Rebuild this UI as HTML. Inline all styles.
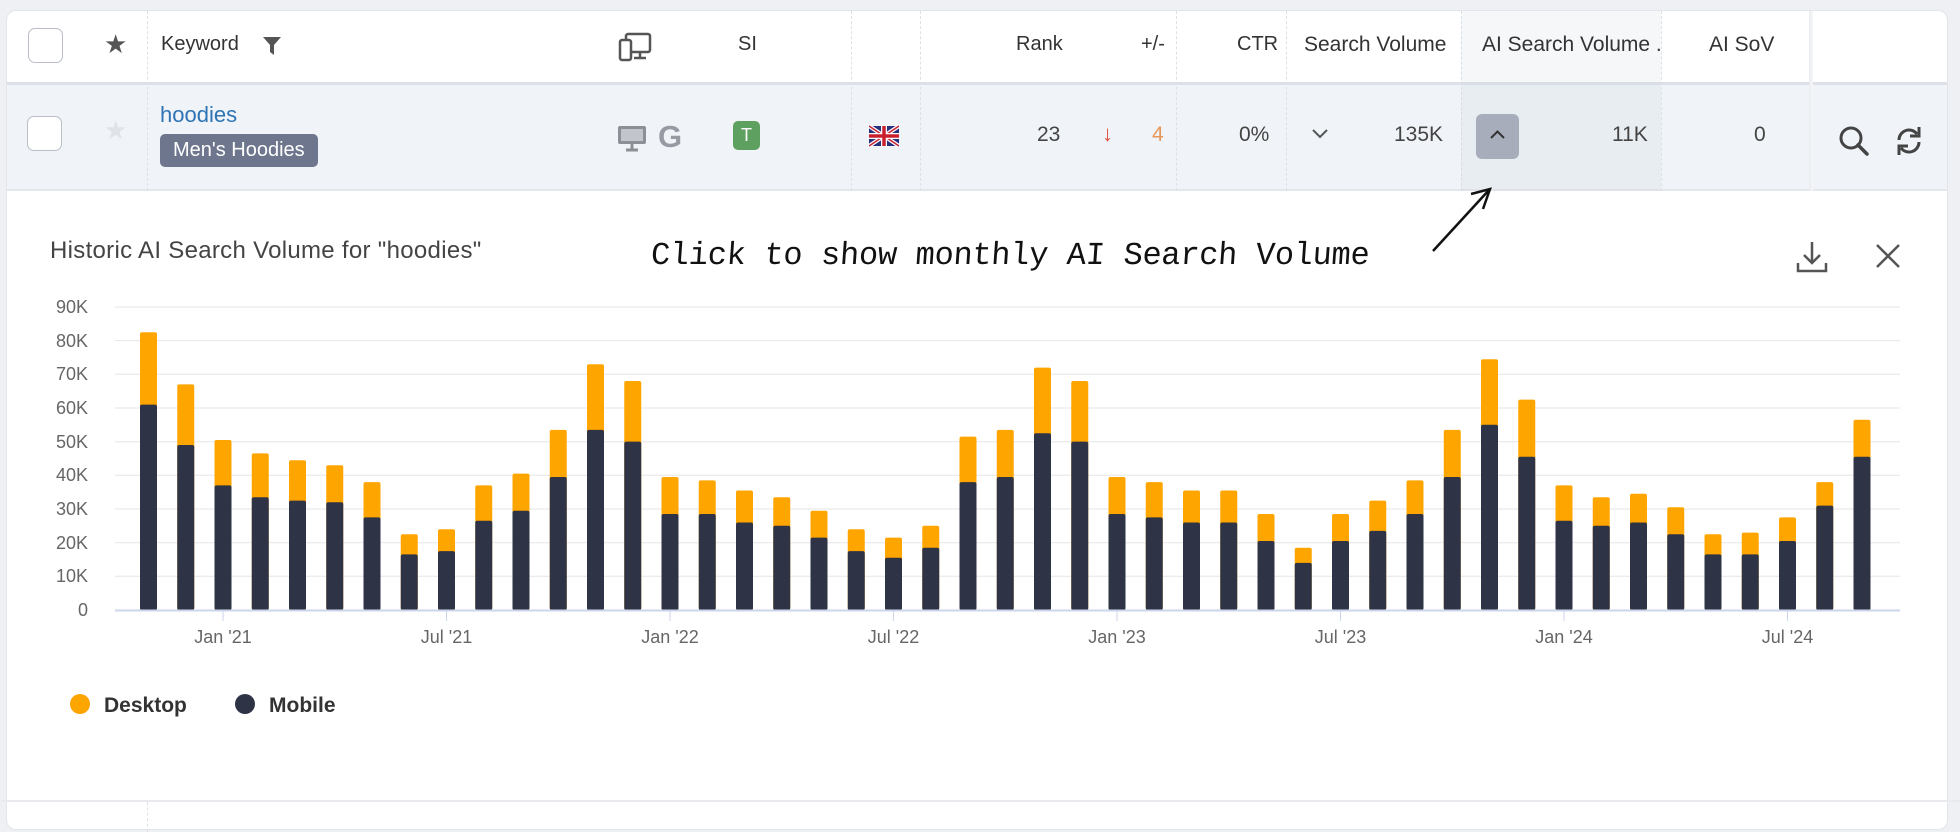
<!DOCTYPE html>
<html><head><meta charset="utf-8"><style>
*{margin:0;padding:0;box-sizing:border-box}
body{width:1960px;height:818px;background:#eef0f3;font-family:"Liberation Sans",sans-serif;position:relative;overflow:hidden;color:#333}
.card{position:absolute;left:6px;top:10px;width:1942px;height:820px;background:#fff;border-radius:10px;border:1px solid #e2e5ea}
.a{position:absolute}
.hdr{font-size:20px;color:#333}
.row{position:absolute;left:0;top:71px;width:1940px;height:109px;background:#f0f3f7;border-top:3px solid #dde1e7;border-bottom:2px solid #e4e7ec}
.vl{position:absolute;top:0;width:1px;height:180px;border-left:1px dashed #dde1e6}
.cb{position:absolute;width:35px;height:35px;border:1.5px solid #b9bec7;border-radius:7px;background:#fff}
.num{font-size:21px;color:#444}
</style></head><body>
<div class="card">
  <div class="row"></div>
  <div class="vl" style="left:140px"></div>
  <div class="vl" style="left:844px"></div>
  <div class="vl" style="left:913px"></div>
  <div class="vl" style="left:1169px"></div>
  <div class="vl" style="left:1279px"></div>
  <div class="vl" style="left:1454px"></div>
  <div class="a" style="left:1454px;top:0;width:200px;height:180px;background:rgba(200,208,220,0.18)"></div>
  <div class="vl" style="left:1654px"></div>
  <div class="a" style="left:1802px;top:0;width:4px;height:180px;background:linear-gradient(90deg,#e8ebef,#f6f7f9)"></div>

  <div class="cb" style="left:21px;top:17px"></div>
  <div class="a" style="left:97px;top:18px;font-size:26px;color:#555">★</div>
  <div class="a hdr" style="left:154px;top:22px">Keyword</div>
  <svg class="a" style="left:255px;top:24px" width="20" height="22" viewBox="0 0 20 22"><path d="M1 2h18l-7 8v10l-4-3v-7z" fill="#555"/></svg>
  <svg class="a" style="left:611px;top:21px" width="34" height="30" viewBox="0 0 34 30"><rect x="8" y="2" width="24" height="18" rx="2" fill="none" stroke="#555" stroke-width="2.5"/><rect x="2" y="8" width="11" height="20" rx="2" fill="#fff" stroke="#555" stroke-width="2.5"/><path d="M16 26h12M22 20v6" stroke="#555" stroke-width="2.5"/></svg>
  <div class="a hdr" style="left:731px;top:22px">SI</div>
  <div class="a hdr" style="left:1009px;top:22px">Rank</div>
  <div class="a hdr" style="left:1134px;top:22px">+/-</div>
  <div class="a hdr" style="left:1230px;top:22px">CTR</div>
  <div class="a hdr" style="left:1297px;top:22px;font-size:21px">Search Volume</div>
  <div class="a hdr" style="left:1475px;top:22px;width:180px;overflow:hidden;white-space:nowrap;font-size:21px">AI Search Volume .</div>
  <div class="a hdr" style="left:1702px;top:22px;font-size:21px">AI SoV</div>

  <div class="cb" style="left:20px;top:105px"></div>
  <div class="a" style="left:97px;top:104px;font-size:26px;color:#dfe2e7">★</div>
  <div class="a" style="left:153px;top:91px;font-size:22px;color:#2e74b5">hoodies</div>
  <div class="a" style="left:153px;top:123px;height:33px;padding:0 13px;line-height:33px;background:#6e768d;color:#fff;font-size:20px;border-radius:5px">Men's Hoodies</div>
  <svg class="a" style="left:610px;top:113px" width="30" height="30" viewBox="0 0 30 30"><rect x="1" y="2" width="28" height="18" rx="2" fill="#8c8f96"/><rect x="4" y="5" width="22" height="12" fill="#c2c5cb"/><path d="M15 20v5M9 26h12" stroke="#8c8f96" stroke-width="3"/></svg>
  <div class="a" style="left:651px;top:108px;font-size:31px;font-weight:bold;color:#979aa2">G</div>
  <div class="a" style="left:726px;top:110px;width:27px;height:29px;background:#5ea05f;border-radius:5px;color:#fff;font-size:18px;text-align:center;line-height:29px">T</div>
  <svg class="a" style="left:862px;top:112px" width="30" height="26" viewBox="0 0 60 40"><rect width="60" height="40" fill="#27307a"/><path d="M0 0L60 40M60 0L0 40" stroke="#fff" stroke-width="8"/><path d="M0 0L60 40M60 0L0 40" stroke="#c8202f" stroke-width="3"/><path d="M30 0v40M0 20h60" stroke="#fff" stroke-width="12"/><path d="M30 0v40M0 20h60" stroke="#c8202f" stroke-width="7"/></svg>
  <div class="a num" style="left:1030px;top:112px">23</div>
  <div class="a" style="left:1095px;top:110px;font-size:22px;color:#e04a3c">↓</div>
  <div class="a num" style="left:1145px;top:112px;color:#e8975a">4</div>
  <div class="a num" style="left:1232px;top:112px">0%</div>
  <svg class="a" style="left:1304px;top:117px" width="18" height="12" viewBox="0 0 18 12"><path d="M2 2l7 7 7-7" stroke="#555" stroke-width="2" fill="none"/></svg>
  <div class="a num" style="left:1387px;top:112px">135K</div>
  <div class="a" style="left:1469px;top:103px;width:43px;height:45px;background:#a7adba;border-radius:6px"></div>
  <svg class="a" style="left:1482px;top:118px" width="17" height="12" viewBox="0 0 17 12"><path d="M2 9l6.5-6.5 6.5 6.5" stroke="#333" stroke-width="2" fill="none"/></svg>
  <div class="a num" style="left:1605px;top:112px">11K</div>
  <div class="a num" style="left:1747px;top:112px">0</div>
  <svg class="a" style="left:1830px;top:113px" width="34" height="34" viewBox="0 0 34 34"><circle cx="14" cy="14" r="10" fill="none" stroke="#444" stroke-width="3"/><path d="M21 21l9 9" stroke="#444" stroke-width="3.5" stroke-linecap="round"/></svg>
  <svg class="a" style="left:1886px;top:113px" width="32" height="34" viewBox="0 0 32 34"><path d="M6 16a10 10 0 0 1 18-6" fill="none" stroke="#444" stroke-width="3"/><path d="M26 3v9h-9" fill="none" stroke="#444" stroke-width="3"/><path d="M26 18a10 10 0 0 1-18 6" fill="none" stroke="#444" stroke-width="3"/><path d="M6 31v-9h9" fill="none" stroke="#444" stroke-width="3"/></svg>

  <div class="a" style="left:43px;top:226px;font-size:24px;color:#444;letter-spacing:0.3px">Historic AI Search Volume for "hoodies"</div>
  <div class="a" style="left:644px;top:226px;font-size:32px;font-family:'Liberation Mono',monospace;color:#111;letter-spacing:-0.3px;transform:skewX(-4deg)">Click to show monthly AI Search Volume</div>
  <svg class="a" style="left:1412px;top:165px" width="80" height="80" viewBox="0 0 80 80"><path d="M14 75L70 14" stroke="#111" stroke-width="2.5" fill="none"/><path d="M52 18L71 13L64 33" stroke="#111" stroke-width="2.5" fill="none"/></svg>
  <svg class="a" style="left:1788px;top:228px" width="34" height="36" viewBox="0 0 34 36"><path d="M17 3v20M9 16l8 8 8-8" stroke="#555" stroke-width="2.5" fill="none"/><path d="M3 24v8h28v-8" stroke="#555" stroke-width="2.5" fill="none"/></svg>
  <svg class="a" style="left:1866px;top:230px" width="30" height="30" viewBox="0 0 30 30"><path d="M4 4l22 22M26 4L4 26" stroke="#555" stroke-width="2.5"/></svg>
  <div class="a" style="left:-6px;top:789px;width:1960px;height:2px;background:#e8eaee"></div>
  <div class="vl" style="left:140px;top:791px;height:30px"></div>
</div>

<svg class="a" style="left:0;top:0" width="1960" height="818" font-family="Liberation Sans, sans-serif">
  <g stroke="#e6e6e6" stroke-width="1">
    <line x1="115" x2="1900" y1="576.3" y2="576.3"/><line x1="115" x2="1900" y1="542.7" y2="542.7"/>
    <line x1="115" x2="1900" y1="509" y2="509"/><line x1="115" x2="1900" y1="475.3" y2="475.3"/>
    <line x1="115" x2="1900" y1="441.7" y2="441.7"/><line x1="115" x2="1900" y1="408" y2="408"/>
    <line x1="115" x2="1900" y1="374.3" y2="374.3"/><line x1="115" x2="1900" y1="340.6" y2="340.6"/>
    <line x1="115" x2="1900" y1="307" y2="307"/>
  </g>
  <g fill="#666" font-size="18" text-anchor="end">
    <text x="88" y="616">0</text><text x="88" y="582">10K</text><text x="88" y="549">20K</text>
    <text x="88" y="515">30K</text><text x="88" y="481">40K</text><text x="88" y="448">50K</text>
    <text x="88" y="414">60K</text><text x="88" y="380">70K</text><text x="88" y="347">80K</text><text x="88" y="313">90K</text>
  </g>
  <g fill="#ffa500">
<rect x="140" y="332.2" width="17" height="277.8" rx="2"/><rect x="177.25" y="384.4" width="17" height="225.6" rx="2"/><rect x="214.5" y="440" width="17" height="170" rx="2"/><rect x="251.75" y="453.4" width="17" height="156.6" rx="2"/><rect x="289" y="460.2" width="17" height="149.8" rx="2"/><rect x="326.25" y="465.2" width="17" height="144.8" rx="2"/><rect x="363.5" y="482.1" width="17" height="127.9" rx="2"/><rect x="400.75" y="534.2" width="17" height="75.8" rx="2"/><rect x="438" y="529.2" width="17" height="80.8" rx="2"/><rect x="475.25" y="485.4" width="17" height="124.6" rx="2"/><rect x="512.5" y="473.6" width="17" height="136.4" rx="2"/><rect x="549.75" y="429.9" width="17" height="180.1" rx="2"/><rect x="587" y="364.2" width="17" height="245.8" rx="2"/><rect x="624.25" y="381" width="17" height="229" rx="2"/><rect x="661.5" y="477" width="17" height="133" rx="2"/><rect x="698.75" y="480.4" width="17" height="129.6" rx="2"/><rect x="736" y="490.5" width="17" height="119.5" rx="2"/><rect x="773.25" y="497.2" width="17" height="112.8" rx="2"/><rect x="810.5" y="510.7" width="17" height="99.3" rx="2"/><rect x="847.75" y="529.2" width="17" height="80.8" rx="2"/><rect x="885" y="537.6" width="17" height="72.4" rx="2"/><rect x="922.25" y="525.8" width="17" height="84.2" rx="2"/><rect x="959.5" y="436.6" width="17" height="173.4" rx="2"/><rect x="996.75" y="429.9" width="17" height="180.1" rx="2"/><rect x="1034" y="367.6" width="17" height="242.4" rx="2"/><rect x="1071.25" y="381" width="17" height="229" rx="2"/><rect x="1108.5" y="477" width="17" height="133" rx="2"/><rect x="1145.75" y="482.1" width="17" height="127.9" rx="2"/><rect x="1183" y="490.5" width="17" height="119.5" rx="2"/><rect x="1220.25" y="490.5" width="17" height="119.5" rx="2"/><rect x="1257.5" y="514" width="17" height="96" rx="2"/><rect x="1294.75" y="547.7" width="17" height="62.3" rx="2"/><rect x="1332" y="514" width="17" height="96" rx="2"/><rect x="1369.25" y="500.6" width="17" height="109.4" rx="2"/><rect x="1406.5" y="480.4" width="17" height="129.6" rx="2"/><rect x="1443.75" y="429.9" width="17" height="180.1" rx="2"/><rect x="1481" y="359.2" width="17" height="250.8" rx="2"/><rect x="1518.25" y="399.6" width="17" height="210.4" rx="2"/><rect x="1555.5" y="485.4" width="17" height="124.6" rx="2"/><rect x="1592.75" y="497.2" width="17" height="112.8" rx="2"/><rect x="1630" y="493.8" width="17" height="116.2" rx="2"/><rect x="1667.25" y="507.3" width="17" height="102.7" rx="2"/><rect x="1704.5" y="534.2" width="17" height="75.8" rx="2"/><rect x="1741.75" y="532.6" width="17" height="77.4" rx="2"/><rect x="1779" y="517.4" width="17" height="92.6" rx="2"/><rect x="1816.25" y="482.1" width="17" height="127.9" rx="2"/><rect x="1853.5" y="419.8" width="17" height="190.2" rx="2"/>
  </g>
  <g fill="#2f3346">
<rect x="140" y="404.6" width="17" height="205.4" rx="2"/><rect x="177.25" y="445" width="17" height="165" rx="2"/><rect x="214.5" y="485.4" width="17" height="124.6" rx="2"/><rect x="251.75" y="497.2" width="17" height="112.8" rx="2"/><rect x="289" y="500.6" width="17" height="109.4" rx="2"/><rect x="326.25" y="502.3" width="17" height="107.7" rx="2"/><rect x="363.5" y="517.4" width="17" height="92.6" rx="2"/><rect x="400.75" y="554.4" width="17" height="55.6" rx="2"/><rect x="438" y="551.1" width="17" height="58.9" rx="2"/><rect x="475.25" y="520.8" width="17" height="89.2" rx="2"/><rect x="512.5" y="510.7" width="17" height="99.3" rx="2"/><rect x="549.75" y="477" width="17" height="133" rx="2"/><rect x="587" y="429.9" width="17" height="180.1" rx="2"/><rect x="624.25" y="441.6" width="17" height="168.4" rx="2"/><rect x="661.5" y="514" width="17" height="96" rx="2"/><rect x="698.75" y="514" width="17" height="96" rx="2"/><rect x="736" y="522.5" width="17" height="87.5" rx="2"/><rect x="773.25" y="525.8" width="17" height="84.2" rx="2"/><rect x="810.5" y="537.6" width="17" height="72.4" rx="2"/><rect x="847.75" y="551.1" width="17" height="58.9" rx="2"/><rect x="885" y="557.8" width="17" height="52.2" rx="2"/><rect x="922.25" y="547.7" width="17" height="62.3" rx="2"/><rect x="959.5" y="482.1" width="17" height="127.9" rx="2"/><rect x="996.75" y="477" width="17" height="133" rx="2"/><rect x="1034" y="433.2" width="17" height="176.8" rx="2"/><rect x="1071.25" y="441.6" width="17" height="168.4" rx="2"/><rect x="1108.5" y="514" width="17" height="96" rx="2"/><rect x="1145.75" y="517.4" width="17" height="92.6" rx="2"/><rect x="1183" y="522.5" width="17" height="87.5" rx="2"/><rect x="1220.25" y="522.5" width="17" height="87.5" rx="2"/><rect x="1257.5" y="541" width="17" height="69" rx="2"/><rect x="1294.75" y="562.9" width="17" height="47.1" rx="2"/><rect x="1332" y="541" width="17" height="69" rx="2"/><rect x="1369.25" y="530.9" width="17" height="79.1" rx="2"/><rect x="1406.5" y="514" width="17" height="96" rx="2"/><rect x="1443.75" y="477" width="17" height="133" rx="2"/><rect x="1481" y="424.8" width="17" height="185.2" rx="2"/><rect x="1518.25" y="456.8" width="17" height="153.2" rx="2"/><rect x="1555.5" y="520.8" width="17" height="89.2" rx="2"/><rect x="1592.75" y="525.8" width="17" height="84.2" rx="2"/><rect x="1630" y="522.5" width="17" height="87.5" rx="2"/><rect x="1667.25" y="534.2" width="17" height="75.8" rx="2"/><rect x="1704.5" y="554.4" width="17" height="55.6" rx="2"/><rect x="1741.75" y="554.4" width="17" height="55.6" rx="2"/><rect x="1779" y="541" width="17" height="69" rx="2"/><rect x="1816.25" y="505.6" width="17" height="104.4" rx="2"/><rect x="1853.5" y="456.8" width="17" height="153.2" rx="2"/>
  </g>
  <line x1="115" x2="1900" y1="610.5" y2="610.5" stroke="#ccd6eb" stroke-width="2"/>
  <g stroke="#ccd6eb" stroke-width="1">
    <line x1="223" x2="223" y1="611" y2="621"/><line x1="446.5" x2="446.5" y1="611" y2="621"/>
    <line x1="670" x2="670" y1="611" y2="621"/><line x1="893.5" x2="893.5" y1="611" y2="621"/>
    <line x1="1117" x2="1117" y1="611" y2="621"/><line x1="1340.5" x2="1340.5" y1="611" y2="621"/>
    <line x1="1564" x2="1564" y1="611" y2="621"/><line x1="1787.5" x2="1787.5" y1="611" y2="621"/>
  </g>
  <g fill="#666" font-size="18" text-anchor="middle">
    <text x="223" y="643">Jan '21</text><text x="446.5" y="643">Jul '21</text>
    <text x="670" y="643">Jan '22</text><text x="893.5" y="643">Jul '22</text>
    <text x="1117" y="643">Jan '23</text><text x="1340.5" y="643">Jul '23</text>
    <text x="1564" y="643">Jan '24</text><text x="1787.5" y="643">Jul '24</text>
  </g>
  <circle cx="80" cy="704" r="10" fill="#ffa500"/>
  <text x="104" y="712" font-size="21" font-weight="bold" fill="#333">Desktop</text>
  <circle cx="245" cy="704" r="10" fill="#2f3346"/>
  <text x="269" y="712" font-size="21" font-weight="bold" fill="#333">Mobile</text>
</svg>
</body></html>
